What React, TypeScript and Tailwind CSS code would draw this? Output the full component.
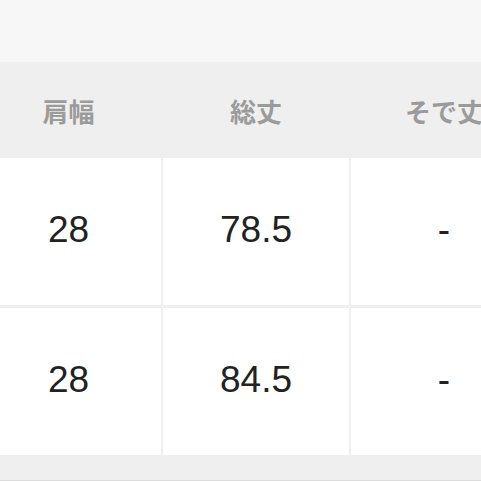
import React from "react"

const headers = ["肩幅", "総丈", "そで丈"]
const rows = [
  ["28", "78.5", "-"],
  ["28", "84.5", "-"],
]

export default function App() {
  return (
    <div className="w-[481px] h-[481px] overflow-hidden bg-[#f7f7f7]">
      <div className="h-[62px] bg-[#f7f7f7]" />

      <div className="bg-[#efefef] border-b border-[#dcdcdc]">
        <div className="ml-[-24px] w-[561px]">
          {/* header */}
          <div className="grid grid-cols-[185px_186px_186px] gap-x-[2px] h-[96px]">
            {headers.map((h) => (
              <div
                key={h}
                className="flex items-center justify-center text-[26px] font-bold text-[#9b9b9b] whitespace-nowrap"
                style={{ fontFamily: '"Noto Sans CJK JP", sans-serif' }}
              >
                {h}
              </div>
            ))}
          </div>

          {/* body */}
          <div className="flex flex-col gap-y-[3px]">
            {rows.map((r, i) => (
              <div key={i} className="grid grid-cols-[185px_186px_186px] gap-x-[2px] h-[147px]">
                {r.map((v, j) => (
                  <div
                    key={j}
                    className="flex items-center justify-center bg-white text-[37px] text-[#222] pb-[4px]"
                    style={{ fontFamily: '"Liberation Sans", Arial, sans-serif' }}
                  >
                    {v}
                  </div>
                ))}
              </div>
            ))}
          </div>

          <div className="h-[25px]" />
        </div>
      </div>
    </div>
  )
}
